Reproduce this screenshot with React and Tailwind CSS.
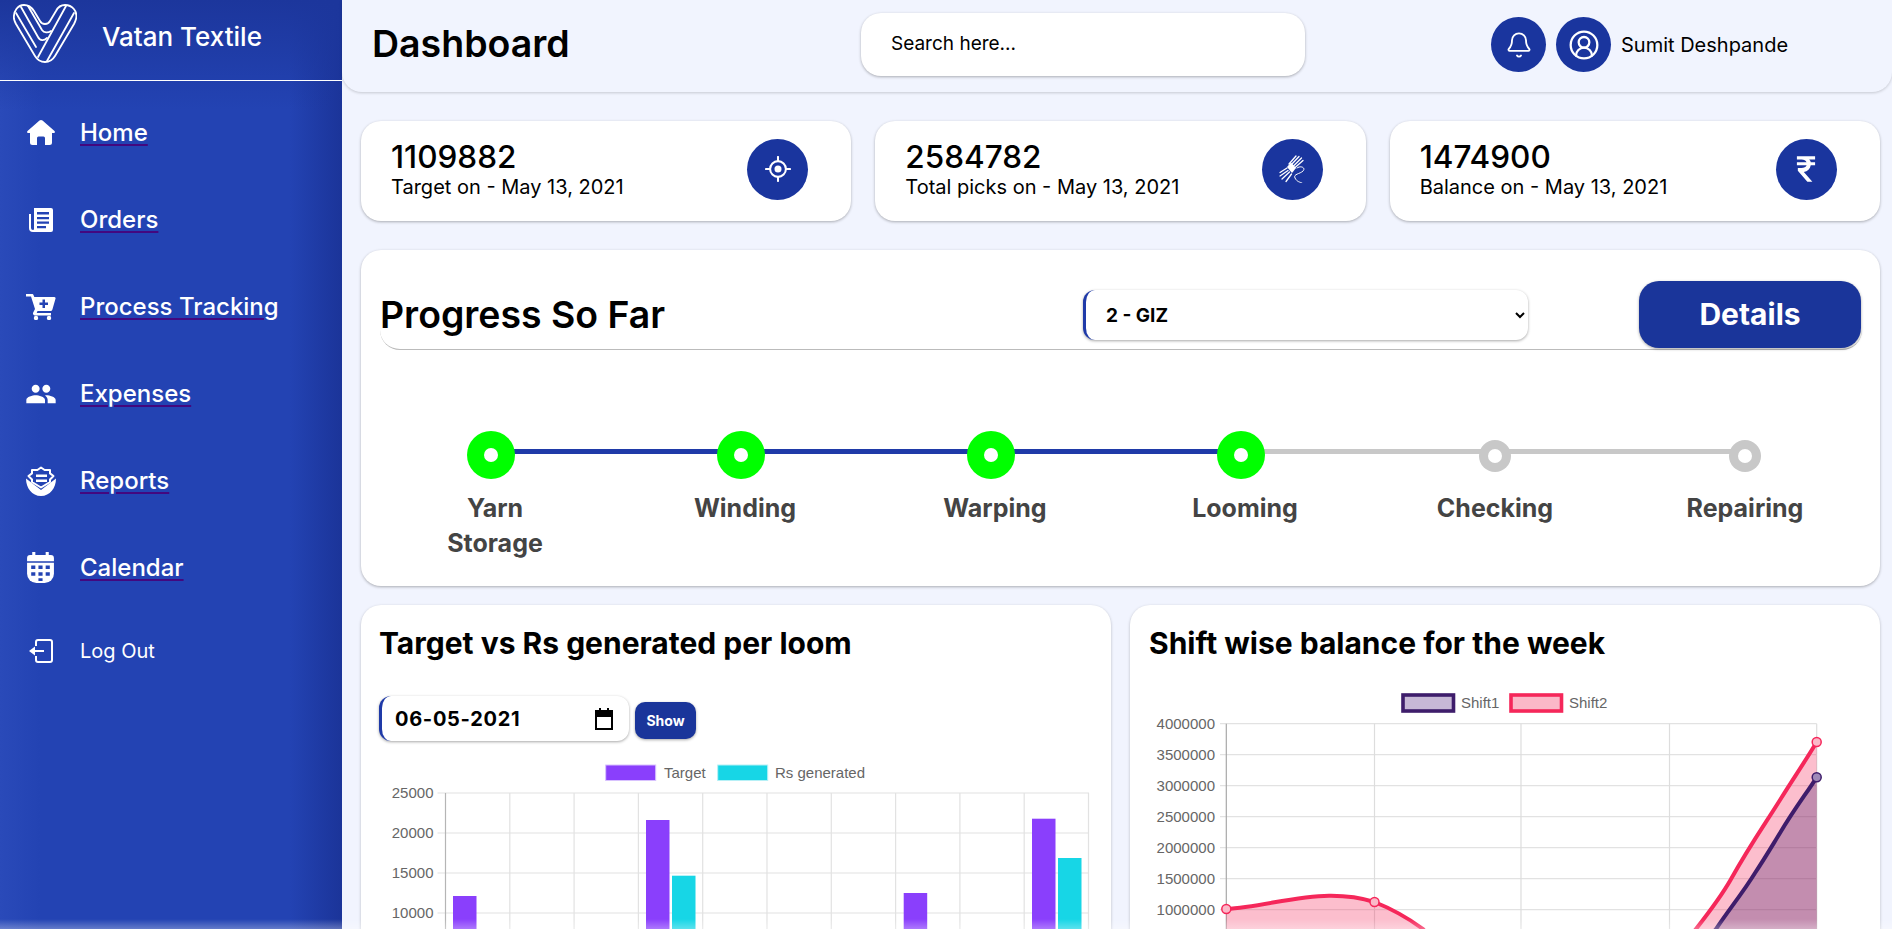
import { Bell, CircleUserRound } from "lucide-react";
import { MdPeople } from "react-icons/md";

const NAV = [
  { label: "Home", icon: <HomeIcon /> },
  { label: "Orders", icon: <OrdersIcon /> },
  { label: "Process Tracking", icon: <CartIcon /> },
  { label: "Expenses", icon: <MdPeople size={32} /> },
  { label: "Reports", icon: <ReportsIcon /> },
  { label: "Calendar", icon: <CalendarIcon /> },
];

const STATS = [
  { value: "1109882", label: "Target on - May 13, 2021", icon: <TargetIcon /> },
  { value: "2584782", label: "Total picks on - May 13, 2021", icon: <YarnIcon /> },
  { value: "1474900", label: "Balance on - May 13, 2021", icon: <RupeeIcon /> },
];

const STEPS = [
  { label: "Yarn Storage", done: true, next: true },
  { label: "Winding", done: true, next: true },
  { label: "Warping", done: true, next: true },
  { label: "Looming", done: true, next: false },
  { label: "Checking", done: false, next: false },
  { label: "Repairing", done: false, last: true },
];

function Logo() {
  return (
    <svg viewBox="12 4 64 59" width="64" height="59" fill="none" stroke="white" strokeWidth="1.800" strokeLinecap="round" strokeLinejoin="round" className="-mt-[5px] shrink-0">
      <path d="M23 5C28 5 31 8 33 11L39 21C41 25 47 25 49 21L55 11C57 7 60 5 64 5C71 5 77 11 75 19C74.500 21 74 22 73 24L54 56C51 61 47 62 44 62C41 62 37 61 34 56L15 24C14 22 13.500 21 13 19C12 11 17 5 23 5Z" />
      <path d="M27 6L41 30C43 33 47 33 50 31" />
      <path d="M20 7L37 37C39 41 43 41 46 38" />
      <path d="M15 13L35 47" />
      <path d="M65 6L37 57" />
      <path d="M73 13L46 61" />
    </svg>
  );
}

function HomeIcon() {
  return (
    <svg viewBox="0 0 28 25" width="28" height="25" fill="white">
      <path d="M14 0c.6 0 1 .2 1.500.6l12 10.400c.8.800.3 2-.8 2H25v9.500a2.500 2.500 0 0 1-2.500 2.500H18v-7a1.500 1.500 0 0 0-1.500-1.500h-5A1.500 1.500 0 0 0 10 18v7H5.500A2.500 2.500 0 0 1 3 22.500V13H1.300c-1.100 0-1.600-1.200-.8-2L12.500.6C13 .2 13.400 0 14 0z" />
    </svg>
  );
}

function OrdersIcon() {
  return (
    <svg viewBox="0 0 26 26" width="26" height="26" fill="white">
      <path d="M6 1h17a2 2 0 0 1 2 2v20a2 2 0 0 1-2 2H5a4 4 0 0 1-4-4V7h2v14a2 2 0 0 0 2 2 1 1 0 0 0 1-1z" />
      <path fill="#2343b3" d="M9 5h12v2.500H9zM9 10h12v2.200H9zM9 14.500h12v2.200H9zM9 19h9v2.200H9z" />
    </svg>
  );
}

function CartIcon() {
  return (
    <svg viewBox="0 0 31 26" width="31" height="26" fill="white">
      <path d="M1 0h6c.8 0 1.400.5 1.600 1.200L9.300 3H29a1.500 1.500 0 0 1 1.400 2l-3 10.500a2 2 0 0 1-2 1.500H12.500l-.8 2H26v2.500H10a2 2 0 0 1-1.800-2.900L10 15 6 2.500H1z" />
      <circle cx="11" cy="24" r="2.200" />
      <circle cx="24" cy="24" r="2.200" />
      <path fill="#2343b3" d="M17.500 5.500h2.500v3h3V11h-3v3h-2.500v-3h-3V8.500h3z" />
    </svg>
  );
}

function ReportsIcon() {
  return (
    <svg viewBox="0 0 30 30" width="30" height="30" fill="white">
      <path d="M0 12.500L15 24l15-11.500C30 22 24 30 15 30S0 22 0 12.500z" />
      <path d="M15 1.500L18.600 4H24v3.400L27.500 10 24 13.500V16l-9 5.500L6 16v-2.500L2.500 10 6 7.400V4h5.400z" fill="#2343b3" stroke="white" strokeWidth="2" strokeLinejoin="round" />
      <path d="M10 8.500h11v2.600H10zM10 13.500h11v2.600H10z" />
    </svg>
  );
}

function CalendarIcon() {
  return (
    <svg viewBox="0 0 26 30" width="27" height="31" fill="white">
      <path d="M5 0h3v3h10V0h3v3h2a3 3 0 0 1 3 3v3H0V6a3 3 0 0 1 3-3h2z" />
      <path d="M0 10.500h26V21a9 9 0 0 1-9 9H9a9 9 0 0 1-9-9z" />
      <path fill="#2343b3" d="M4 13h4v3.500H4zM11 13h4v3.500h-4zM18 13h4v3.500h-4zM4 19.500h4V23H4zM11 19.500h4V23h-4zM18 19.500h4V23h-4zM11 25.500h4V28h-4z" />
    </svg>
  );
}

function LogoutIcon() {
  return (
    <svg viewBox="0 0 26 24" width="26" height="24" fill="none" stroke="white" strokeWidth="2">
      <path d="M8 7V3a2 2 0 0 1 2-2h12a2 2 0 0 1 2 2v18a2 2 0 0 1-2 2H10a2 2 0 0 1-2-2v-4" />
      <path d="M16 12H4" />
      <path d="M7 7.500L1 12l6 4.500z" fill="white" stroke="none" />
    </svg>
  );
}

function TargetIcon() {
  return (
    <svg viewBox="0 0 28 28" width="26" height="26" fill="none" stroke="white" strokeWidth="2.200">
      <circle cx="14" cy="14" r="8.500" />
      <circle cx="14" cy="14" r="3.800" fill="white" stroke="none" />
      <path d="M14 1v4M14 23v4M1 14h4M23 14h4" strokeLinecap="round" />
    </svg>
  );
}

function YarnIcon() {
  return (
    <svg viewBox="0 0 27 28" width="27" height="28" fill="none" stroke="white" strokeWidth="1.300" strokeLinecap="round">
      <path d="M10 9L17 1M12 10L20 1.500M14 11.500L22.500 3M15.500 13L24 5.500" />
      <path d="M8 13L1 17.500M9 15.500L1 21M10.500 17L3 24M12.500 19L7 26.500" />
      <path d="M8 12L12 7.500L17 13L13 18z" fill="white" stroke="none" />
      <path d="M18 13C22 10 27 13 24 16S14 19 16 23 21 27 23 28" strokeWidth="1" />
    </svg>
  );
}

function RupeeIcon() {
  return (
    <svg viewBox="0 0 22 28" width="20" height="28" fill="white">
      <path d="M1 0h20v3.500h-6.500c1 1 1.500 2 1.800 3H21V10h-4.800c-.6 4-3.400 6.600-7.600 7.400L18 28h-5.500L2 16v-3h4c2.800 0 5-1 5.700-3H1V6.500h10.600C10.800 4.500 9 3.500 6 3.500H1z" />
    </svg>
  );
}

function CircleIcon({ children, className }) {
  return <div className={`flex shrink-0 items-center justify-center rounded-full bg-[#1a359e] ${className}`}>{children}</div>;
}

function Step({ label, done, next, last }) {
  return (
    <div className="relative flex flex-col items-center text-center">
      {!last && (
        <div className={`absolute top-[18px] left-[120px] h-[5px] w-[255px] ${next ? "bg-[#1f3aa8]" : "bg-[#c8c8c8]"}`} />
      )}
      <div className="relative z-10 flex h-[48px] items-start">
        {done ? (
          <div className="-ml-[9px] flex h-[48px] w-[48px] items-center justify-center rounded-full bg-[#00ff00]">
            <div className="h-[14px] w-[14px] rounded-full bg-white" />
          </div>
        ) : (
          <div className="mt-[9px] flex h-[32px] w-[32px] items-center justify-center rounded-full bg-[#c8c8c8]">
            <div className="h-[14px] w-[14px] rounded-full bg-white" />
          </div>
        )}
      </div>
      <div className="mt-[12px] w-[125px] text-[25px] leading-[35px] font-bold text-[#444444]">{label}</div>
    </div>
  );
}

function BarChart() {
  const X0 = 84.5;
  const STEP = 64.3;
  const Y = (v) => 40 + (25000 - v) * 0.008;
  const bars = [
    { x: 92, top: 143, c: "#8a3ffc" },
    { x: 285, top: 67, c: "#8a3ffc" },
    { x: 311, top: 122.7, c: "#17d6e6" },
    { x: 542.7, top: 140, c: "#8a3ffc" },
    { x: 671, top: 65.7, c: "#8a3ffc" },
    { x: 697, top: 105, c: "#17d6e6" },
  ];
  return (
    <svg width="750" height="176" className="block" fontFamily="'Liberation Sans', Arial, sans-serif" fontSize="15" fill="#666666">
      <rect x="244.700" y="12" width="50" height="15.500" fill="#8a3ffc" stroke="#d8c2fe" />
      <text x="303" y="24.500">Target</text>
      <rect x="356.700" y="12" width="50" height="15.500" fill="#17d6e6" stroke="#b6f0f6" />
      <text x="414" y="24.500">Rs generated</text>
      {[25000, 20000, 15000, 10000].map((v) => (
        <g key={v}>
          <line x1={X0 - 8} x2={728} y1={Y(v)} y2={Y(v)} stroke="#e2e2e2" strokeWidth="1.200" />
          <text x={X0 - 12} y={Y(v) + 5} textAnchor="end">{v}</text>
        </g>
      ))}
      {Array.from({ length: 11 }, (_, i) => (
        <line key={i} x1={X0 + i * STEP} x2={X0 + i * STEP} y1={40} y2={176} stroke={i === 0 ? "#b5b5b5" : "#e2e2e2"} strokeWidth="1.200" />
      ))}
      {bars.map((b) => (
        <rect key={b.x} x={b.x} y={b.top} width="23.500" height={176 - b.top} fill={b.c} />
      ))}
    </svg>
  );
}

function LineChart() {
  const X = [96.3, 244.5, 391, 539.5, 686.7];
  const Y = (m) => 43.7 + (4000000 - m) * 0.000062;
  const shift2 = "M96.300 229C130 227 165 216 199 215.700C216 215.500 232 218 244.500 222C262 229 278 238 293 249C330 290 380 330 430 340C480 335 530 295 566 249C580 231 592 215 600.500 200C620 165 635 144 650 120C665 96 676 80 686.700 62";
  const shift1 = "M96.300 290C200 320 300 335 430 345C490 340 540 300 586 249C600 228 612 214 625 193C635 178 642 166 650 153C665 128 676 114 686.700 97.300";
  return (
    <svg width="750" height="260" className="block" fontFamily="'Liberation Sans', Arial, sans-serif" fontSize="15" fill="#666666">
      <rect x="273" y="15" width="50.500" height="16" fill="#c7b8d6" stroke="#3e1d6b" strokeWidth="3.600" />
      <text x="331" y="28">Shift1</text>
      <rect x="381" y="15" width="50.500" height="16" fill="#fbb8c8" stroke="#f5275a" strokeWidth="3.600" />
      <text x="439" y="28">Shift2</text>
      {[4000000, 3500000, 3000000, 2500000, 2000000, 1500000, 1000000].map((v) => (
        <g key={v}>
          <line x1={90} x2={686.7} y1={Y(v)} y2={Y(v)} stroke="#e2e2e2" strokeWidth="1.200" />
          <text x={85} y={Y(v) + 5} textAnchor="end">{v}</text>
        </g>
      ))}
      {X.map((x, i) => (
        <line key={x} x1={x} x2={x} y1={43.7} y2={260} stroke={i === 0 ? "#a8a8a8" : "#dddddd"} strokeWidth="1.200" />
      ))}
      <path d={`${shift2}L686.700 400L96.300 400Z`} fill="#f5275a" fillOpacity="0.3" />
      <path d={`${shift1}L686.700 400L96.300 400Z`} fill="#3e1d6b" fillOpacity="0.3" />
      <path d={shift2} fill="none" stroke="#f5275a" strokeWidth="4" />
      <path d={shift1} fill="none" stroke="#3e1d6b" strokeWidth="4" />
      {[[96.3, 229], [244.5, 222], [686.7, 62]].map(([x, y]) => (
        <circle key={x} cx={x} cy={y} r="4.500" fill="#fbb8c8" stroke="#f5275a" strokeWidth="1.500" />
      ))}
      <circle cx="686.700" cy="97.300" r="4.500" fill="#a08ab8" stroke="#3e1d6b" strokeWidth="1.500" />
    </svg>
  );
}

export default function App() {
  return (
    <div className="relative flex h-screen overflow-hidden bg-[linear-gradient(90deg,#fcfdff,#f1f4fe_70px)] font-['Inter',sans-serif] text-black">
      <aside className="w-[342px] shrink-0 bg-[linear-gradient(180deg,#1c369c_0,rgba(28,54,156,0)_110px),linear-gradient(90deg,#2a4ab9_0,#2343b3_40px,#2343b3_290px,#1b3499_100%)]">
        <div className="flex h-[81px] items-center gap-[25px] border-b border-white pb-[8px] pl-[13px]">
          <Logo />
          <span className="text-[26px] font-medium text-white">Vatan Textile</span>
        </div>
        <nav className="flex flex-col pt-[8px] pl-[24px]">
          {NAV.map((n) => (
            <a key={n.label} href="#" className="flex h-[87px] items-center gap-[23px] text-white">
              <span className="flex w-[33px] justify-center">{n.icon}</span>
              <span className="text-[24px] font-medium underline decoration-[#43087f] decoration-2 underline-offset-[3px]">{n.label}</span>
            </a>
          ))}
          <a href="#" className="flex h-[79px] items-center gap-[23px] text-white">
            <span className="flex w-[33px] justify-center"><LogoutIcon /></span>
            <span className="text-[20px]">Log Out</span>
          </a>
        </nav>
      </aside>

      <main className="min-w-0 flex-1">
        <header className="flex h-[92px] items-center rounded-b-[20px] pb-[3px] pl-[30px] shadow-[0_1px_3px_rgba(0,0,0,0.18)]">
          <h1 className="w-[489px] text-[37.5px] font-semibold">Dashboard</h1>
          <div className="flex h-[63px] w-[444px] items-center rounded-[20px] bg-white pl-[30px] text-[19px] shadow-[0_1px_3px_rgba(0,0,0,0.3)]">
            Search here...
          </div>
          <CircleIcon className="ml-[186px] h-[55px] w-[55px]"><Bell size={28} color="white" strokeWidth={1.600} /></CircleIcon>
          <CircleIcon className="ml-[10px] h-[55px] w-[55px]"><CircleUserRound size={32} color="white" strokeWidth={1.700} /></CircleIcon>
          <span className="ml-[10px] text-[20px]">Sumit Deshpande</span>
        </header>

        <div className="flex flex-col gap-[19px] pt-[29px] pr-[12px] pl-[19px]">
          <section className="flex gap-[24px]">
            {STATS.map((s) => (
              <div key={s.value} className="flex h-[100px] flex-1 items-center justify-between rounded-[20px] bg-white pr-[43px] pb-[4px] pl-[30px] shadow-[0_1px_3px_rgba(0,0,0,0.3)]">
                <div>
                  <div className="text-[31.5px] leading-[36px] font-medium">{s.value}</div>
                  <div className="text-[20px] leading-[24px]">{s.label}</div>
                </div>
                <CircleIcon className="h-[61px] w-[61px]">{s.icon}</CircleIcon>
              </div>
            ))}
          </section>

          <section className="mt-[10px] h-[336px] rounded-[20px] bg-white pt-[31px] pr-[18px] pl-[19px] shadow-[0_1px_3px_rgba(0,0,0,0.3)]">
            <div className="flex h-[69px] items-center rounded-b-[20px] border-b border-[#bbbbbb]">
              <h2 className="w-[703px] text-[37.4px] font-semibold">Progress So Far</h2>
              <select className="h-[50px] w-[445px] rounded-[12px] border-l-[3px] border-[#1f3aa8] bg-white pl-[16px] text-[19px] font-bold shadow-[0_1px_3px_rgba(0,0,0,0.35)]">
                <option>2 - GIZ</option>
              </select>
              <button className="ml-[111px] h-[67px] w-[222px] self-start rounded-[20px] bg-[#1a359a] text-[30px] font-bold text-white shadow-[0_1px_3px_rgba(0,0,0,0.35)]">
                Details
              </button>
            </div>
            <div className="-ml-[10px] grid w-[1500px] grid-cols-6 pt-[81px]">
              {STEPS.map((s) => <Step key={s.label} {...s} />)}
            </div>
          </section>

          <section className="grid grid-cols-2 gap-[19px]">
            <div className="h-[420px] rounded-[20px] bg-white pt-[16px] shadow-[0_1px_3px_rgba(0,0,0,0.25)]">
              <h2 className="pl-[18px] text-[30px] font-bold">Target vs Rs generated per loom</h2>
              <div className="mt-[30px] flex items-start gap-[6px] pl-[18px]">
                <div className="flex h-[45px] w-[250px] items-center justify-between rounded-[12px] border-l-[3px] border-[#1f3aa8] bg-white pr-[15px] pl-[13px] text-[20px] font-bold tracking-[0.7px] shadow-[0_1px_3px_rgba(0,0,0,0.35)]">
                  06-05-2021
                  <svg viewBox="0 0 20 22" width="20" height="22" fill="none" stroke="black" strokeWidth="2"><path d="M2 5h16v16H2z" /><path d="M2 3h16v5H2z" fill="black" /><path d="M6 0v4M14 0v4" /></svg>
                </div>
                <button className="mt-[6px] h-[37px] w-[61px] rounded-[10px] bg-[#1a359a] text-[14px] font-bold text-white shadow-[0_1px_3px_rgba(0,0,0,0.35)]">Show</button>
              </div>
              <div className="mt-[12px]"><BarChart /></div>
            </div>
            <div className="h-[420px] rounded-[20px] bg-white pt-[16px] shadow-[0_1px_3px_rgba(0,0,0,0.25)]">
              <h2 className="pl-[19px] text-[30px] font-bold">Shift wise balance for the week</h2>
              <div className="mt-[14px]"><LineChart /></div>
            </div>
          </section>
        </div>
      </main>

      {/* soft fade along the bottom edge */}
      <div className="pointer-events-none absolute inset-x-0 bottom-0 h-[10px] bg-gradient-to-t from-white/30 to-transparent" />
    </div>
  );
}
